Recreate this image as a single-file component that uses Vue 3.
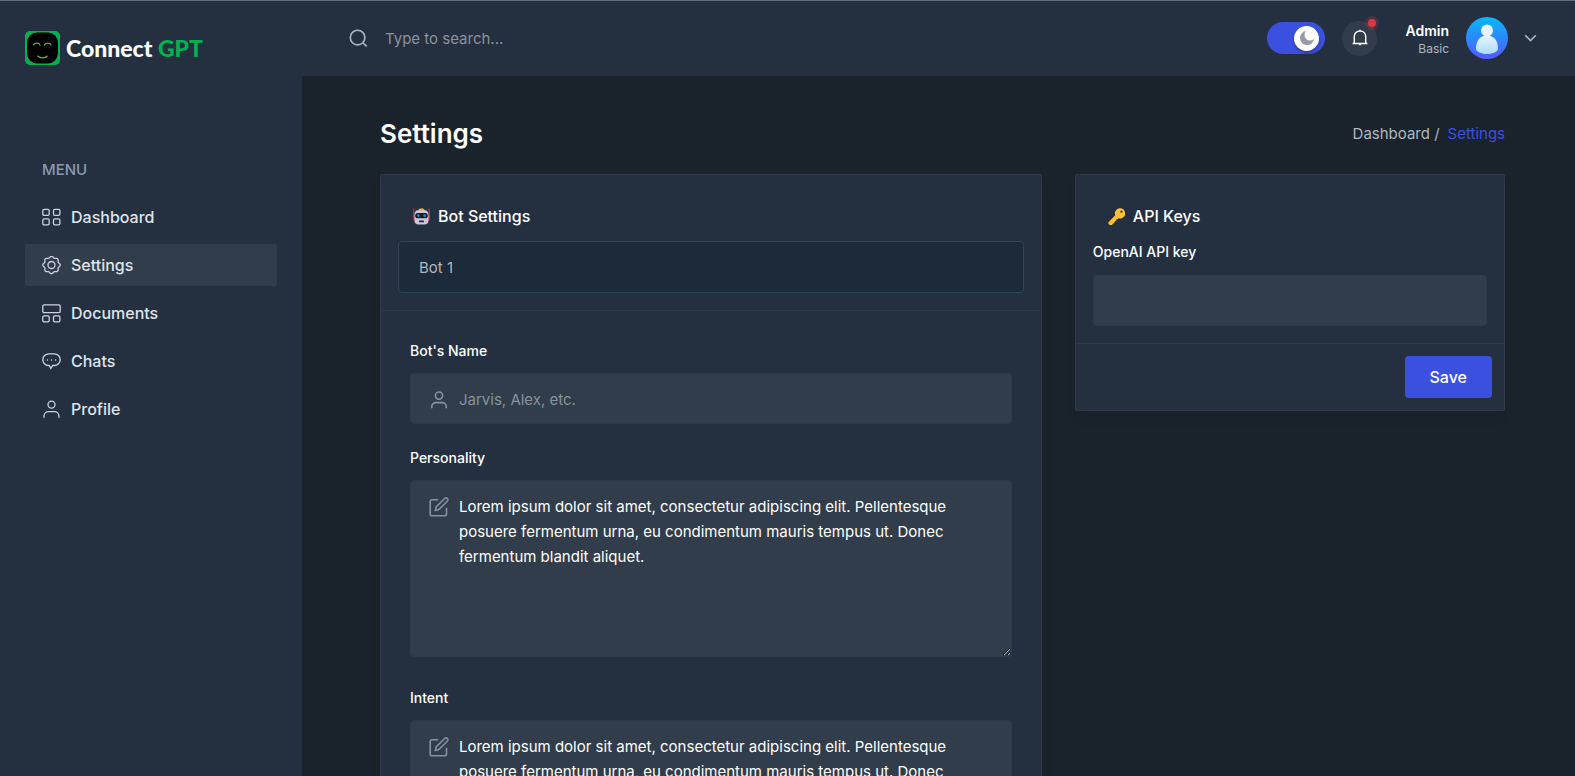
<script setup>
import { ref } from 'vue'

const menu = [
  { name: 'Dashboard', icon: 'grid' },
  { name: 'Settings', icon: 'gear' },
  { name: 'Documents', icon: 'layout' },
  { name: 'Chats', icon: 'chat' },
  { name: 'Profile', icon: 'user' }
]
const active = ref('Settings')
const dark = ref(true)
const search = ref('')
const bot = ref('Bot 1')
const botName = ref('')
const apiKey = ref('')
const lorem =
  'Lorem ipsum dolor sit amet, consectetur adipiscing elit. Pellentesque posuere fermentum urna, eu condimentum mauris tempus ut. Donec fermentum blandit aliquet.'
const areas = ref([
  { id: 'personality', label: 'Personality', text: lorem },
  { id: 'intent', label: 'Intent', text: lorem }
])

const gearPoints = Array.from({ length: 120 }, (_, i) => {
  const a = (i / 120) * Math.PI * 2
  const r = 8 + 0.7 * Math.cos(8 * a)
  return `${(9.5 + r * Math.cos(a)).toFixed(2)},${(9 + r * Math.sin(a)).toFixed(2)}`
}).join(' ')
</script>

<template>
  <div class="shell">
    <aside class="sidebar">
      <a class="brand" href="#">
        <svg class="brand-mark" viewBox="0 0 35 34" aria-hidden="true">
          <rect width="35" height="34" rx="5" fill="#05b050" />
          <rect x="2" y="1.500" width="31" height="31" rx="10" fill="#000" />
          <g fill="none" stroke="#6cb33f" stroke-width="1.300" stroke-linecap="round">
            <path d="M8.500 14c1-2.400 5.500-2.400 6.500 0M19.500 14c1-2.400 5.500-2.400 6.500 0" />
            <path d="M13 25.300c2 2 7 2 9 0" />
          </g>
        </svg>
        <span class="brand-name">Connect <span class="brand-green">GPT</span></span>
      </a>
      <nav class="nav">
        <h3 class="nav-title">MENU</h3>
        <ul>
          <li v-for="item in menu" :key="item.name">
            <a
              href="#"
              class="nav-link"
              :class="{ active: active === item.name }"
              @click.prevent="active = item.name"
            >
              <svg class="nav-icon" viewBox="0 0 19 19" aria-hidden="true">
                <g v-if="item.icon === 'grid'">
                  <rect x=".8" y="1.300" width="6.400" height="6" rx="1.300" />
                  <rect x="11.500" y="1.300" width="6.400" height="6" rx="1.300" />
                  <rect x=".8" y="10.900" width="6.400" height="6" rx="1.300" />
                  <rect x="11.500" y="10.900" width="6.400" height="6" rx="1.300" />
                </g>
                <g v-else-if="item.icon === 'gear'">
                  <circle cx="9.500" cy="9" r="3.500" />
                  <polygon :points="gearPoints" />
                </g>
                <g v-else-if="item.icon === 'layout'">
                  <rect x=".8" y=".8" width="17.400" height="7.800" rx="1.300" />
                  <rect x=".8" y="11.800" width="6.400" height="6" rx="1.300" />
                  <rect x="11.500" y="11.800" width="6.400" height="6" rx="1.300" />
                </g>
                <g v-else-if="item.icon === 'chat'">
                  <path
                    d="M7 1.800h5.400c3.200 0 5.800 2.600 5.800 5.900 0 3.200-2.600 5.800-5.800 5.800h-1.700l-1.900 2.900-1.500-2.900H6.600C3.400 13.500.8 10.900.8 7.700c0-3.300 2.600-5.900 6.200-5.900z"
                  />
                  <path class="dots" d="M5.300 8h.1M9.400 8h.1M13.500 8h.1" />
                </g>
                <g v-else>
                  <circle cx="9.500" cy="4.600" r="3.500" />
                  <path d="M2 17.800v-1.600c0-2.600 2.100-4.500 4.600-4.500h5.800c2.500 0 4.600 1.900 4.600 4.500v1.600" />
                </g>
              </svg>
              {{ item.name }}
            </a>
          </li>
        </ul>
      </nav>
    </aside>

    <div class="content">
      <header class="header">
        <form class="search" @submit.prevent>
          <button type="submit" class="plain" aria-label="Search">
            <svg class="search-icon" viewBox="0 0 19 19" aria-hidden="true">
              <circle cx="8.600" cy="8.600" r="7.300" />
              <path d="M13.800 13.800l4 3.600" />
            </svg>
          </button>
          <input v-model="search" type="text" placeholder="Type to search..." aria-label="Search text" />
        </form>
        <div class="tools">
          <label class="toggle">
            <input v-model="dark" type="checkbox" aria-label="Dark mode" />
            <span class="knob">
              <svg viewBox="0 0 16 16" aria-hidden="true">
                <path d="M14.900 8.900A7 7 0 1 1 7.100 1.100a5.500 5.500 0 0 0 7.800 7.800z" fill="#969aa1" />
              </svg>
            </span>
          </label>
          <button type="button" class="bell" aria-label="Notifications">
            <svg viewBox="0 0 18 18" aria-hidden="true">
              <path d="M3.300 14V7.400C3.300 4.300 5.800 2 9 2s5.700 2.300 5.700 5.400V14M1.600 14.500h14.800M9 .700V2M9 14.500v2" />
            </svg>
            <span class="badge"></span>
          </button>
          <button type="button" class="user">
            <span class="user-text">
              <span class="user-name">Admin</span>
              <span class="user-role">Basic</span>
            </span>
            <svg class="avatar" viewBox="0 0 42 42" aria-hidden="true">
              <defs>
                <linearGradient id="avatarBg" x1="0" y1="0" x2="0" y2="1">
                  <stop offset="0" stop-color="#04b9fd" />
                  <stop offset="1" stop-color="#5558ff" />
                </linearGradient>
                <linearGradient id="avatarFg" x1="0" y1="0" x2="0" y2="1">
                  <stop offset="0" stop-color="#e6f4ff" />
                  <stop offset="1" stop-color="#addcff" />
                </linearGradient>
              </defs>
              <circle cx="21" cy="21" r="21" fill="url(#avatarBg)" />
              <circle cx="21" cy="13.500" r="6" fill="#e6f4ff" />
              <path d="M10 31.500C10 23.500 14 18.400 21 18.400s11 5.100 11 13.100c0 3-4.500 5.500-11 5.500s-11-2.500-11-5.500z" fill="url(#avatarFg)" />
            </svg>
            <svg class="chevron" viewBox="0 0 13 8" aria-hidden="true">
              <path d="M1.200 1.200l5.300 5.300 5.300-5.300" />
            </svg>
          </button>
        </div>
      </header>

      <main class="main">
        <div class="title-row">
          <h2>Settings</h2>
          <nav class="crumbs" aria-label="Breadcrumb">
            <a href="#">Dashboard /</a>
            <a href="#" class="current">Settings</a>
          </nav>
        </div>

        <div class="cards">
          <section class="card bot-card">
            <div class="card-top">
              <h3>
                <svg class="emoji" viewBox="0 0 17 17" aria-hidden="true">
                  <path d="M.7 2v8M16.300 2v8" stroke="#f0263c" stroke-width="1" />
                  <circle cx=".9" cy="1.200" r=".8" fill="#f0263c" />
                  <circle cx="16.100" cy="1.200" r=".8" fill="#f0263c" />
                  <rect x=".3" y="7" width="1.600" height="5.500" rx=".6" fill="#f0263c" />
                  <rect x="15.100" y="7" width="1.600" height="5.500" rx=".6" fill="#f0263c" />
                  <path d="M5.200 3c0-1.800 1.400-2.700 3.300-2.700s3.300.9 3.300 2.700z" fill="#fba81f" />
                  <path d="M5 2.300h7c2.200 0 3.500 2 3.500 4v6.200c0 2.400-1.500 4-4 4h-6c-2.500 0-4-1.600-4-4V6.300c0-2 1.300-4 3.500-4z" fill="#cdc4d8" />
                  <rect x="2.200" y="4.900" width="12.600" height="5.400" rx="2.600" fill="#1c1b23" />
                  <circle cx="5.400" cy="7.600" r="1.300" fill="#0a96dc" />
                  <circle cx="11.600" cy="7.600" r="1.300" fill="#0a96dc" />
                  <rect x="6" y="12.400" width="5" height="1.800" rx=".6" fill="#321b41" />
                </svg>
                Bot Settings
              </h3>
              <select v-model="bot" class="select" aria-label="Bot">
                <option>Bot 1</option>
              </select>
            </div>
            <form class="fields" @submit.prevent>
              <div class="field">
                <label for="bot-name">Bot's Name</label>
                <div class="control">
                  <svg class="field-icon" viewBox="0 0 20 20" aria-hidden="true">
                    <circle cx="10" cy="5.600" r="3.600" />
                    <path d="M2.800 18.300v-1.700c0-2.200 1.700-4 3.900-4h6.600c2.200 0 3.900 1.800 3.900 4v1.700" />
                  </svg>
                  <input id="bot-name" v-model="botName" type="text" class="box" placeholder="Jarvis, Alex, etc." />
                </div>
              </div>
              <div v-for="area in areas" :key="area.id" class="field">
                <label :for="area.id">{{ area.label }}</label>
                <div class="control">
                  <svg class="field-icon" viewBox="0 0 20 20" aria-hidden="true">
                    <path d="M9.200 2.700H3c-1 0-1.800.8-1.800 1.800v12.400c0 1 .8 1.800 1.800 1.800h12.700c1 0 1.800-.8 1.800-1.800v-6.200" />
                    <path d="M15.600 1.500c.8-.8 2-.8 2.700 0 .8.700.8 1.900 0 2.700l-8.500 8.400-3.500.9.900-3.600z" />
                  </svg>
                  <textarea :id="area.id" v-model="area.text" class="box" rows="6" spellcheck="false"></textarea>
                </div>
              </div>
            </form>
          </section>

          <section class="card key-card">
            <form @submit.prevent>
              <div class="card-top">
                <h3>
                  <svg class="emoji" viewBox="0 0 17 17" aria-hidden="true">
                    <path
                      fill="#fdc130"
                      fill-rule="evenodd"
                      d="M11.600.3a5.100 5.100 0 0 1 2.600 9.700c-1.200.6-2.600.7-3.800.3l-.8.900-1.200.1-.2 1.500-1.300.2-.2 1.200-2.700 2.500c-.7.600-1.600.5-3-.1-.9-1-.9-1.900-.3-2.500l6.500-6.900A5.100 5.100 0 0 1 11.600.3zm1.800 2.300a1.100 1.100 0 1 0 0 2.200 1.100 1.100 0 0 0 0-2.200z"
                    />
                  </svg>
                  API Keys
                </h3>
                <label for="api-key">OpenAI API key</label>
                <input id="api-key" v-model="apiKey" type="text" class="box" />
              </div>
              <div class="card-foot">
                <button type="submit" class="save">Save</button>
              </div>
            </form>
          </section>
        </div>
      </main>
    </div>
  </div>
</template>

<style>
html,
body {
  background: #1a222c;
}
body {
  margin: 0;
}
</style>

<style scoped>
* {
  box-sizing: border-box;
}
.shell {
  display: flex;
  height: 100vh;
  overflow: hidden;
  border-top: 1px solid #5f6f79;
  background: #1a222c;
  color: #aeb7c0;
  font: 400 15px/25px Inter, "Liberation Sans", sans-serif;
}
a {
  color: inherit;
  text-decoration: none;
}
h2,
h3,
ul {
  margin: 0;
  padding: 0;
  list-style: none;
}
input,
select,
textarea,
button {
  font: inherit;
  color: inherit;
}
svg {
  display: block;
  flex: none;
}
.sidebar {
  flex: 0 0 302px;
  background: #24303f;
}
.brand {
  display: flex;
  align-items: center;
  gap: 6px;
  padding: 30px 25px 0;
}
.brand-mark {
  width: 35px;
  height: 34px;
}
.brand-name {
  font: 900 23px/34px Lato, sans-serif;
  color: #fff;
}
.brand-green {
  color: #05b050;
}
.nav {
  padding: 92px 25px 0;
}
.nav-title {
  padding-left: 17px;
  margin-bottom: 14px;
  font-size: 15px;
  font-weight: 500;
  color: #8a99af;
}
.nav ul {
  display: flex;
  flex-direction: column;
  gap: 6px;
}
.nav-link {
  display: flex;
  align-items: center;
  gap: 10px;
  height: 42px;
  padding: 0 17px;
  border-radius: 2px;
  color: #dee4ee;
  font-size: 16px;
  font-weight: 500;
}
.nav-link.active {
  background: #313d4a;
}
.nav-icon {
  width: 19px;
  height: 19px;
  fill: none;
  stroke: #ccd3df;
  stroke-width: 1.3;
}
.dots {
  stroke-linecap: round;
  stroke-width: 1.4;
}
.content {
  flex: 1;
  min-width: 0;
  display: flex;
  flex-direction: column;
}
.header {
  flex: 0 0 75px;
  display: flex;
  align-items: center;
  justify-content: space-between;
  padding: 0 38px 0 47px;
  background: #24303f;
}
.plain {
  padding: 0;
  border: 0;
  background: none;
}
.search {
  display: flex;
  flex: 1;
  align-items: center;
  gap: 17px;
}
.search input {
  flex: 1;
  min-width: 0;
  padding: 0;
  border: 0;
  outline: 0;
  background: none;
}
.search input::placeholder {
  color: #8a939e;
  opacity: 1;
}
.search-icon {
  width: 19px;
  height: 19px;
  fill: none;
  stroke: #aeb7c0;
  stroke-width: 1.6;
}
.tools {
  display: flex;
  align-items: center;
  padding-bottom: 1px;
}
.toggle {
  display: flex;
  align-items: center;
  justify-content: flex-end;
  width: 58px;
  height: 32px;
  padding: 0 6px;
  border-radius: 16px;
  background: #3c50e0;
}
.toggle input {
  width: 0;
  height: 0;
  margin: 0;
  opacity: 0;
}
.knob {
  display: grid;
  place-items: center;
  width: 25px;
  height: 25px;
  border-radius: 50%;
  background: #fff;
  box-shadow: 0 2px 3px rgba(0, 0, 0, 0.3);
}
.knob svg {
  width: 16px;
  height: 16px;
}
.bell {
  position: relative;
  display: grid;
  place-items: center;
  width: 35px;
  height: 35px;
  margin-left: 17px;
  padding: 0;
  border: 0;
  border-radius: 50%;
  background: #313d4a;
}
.bell svg {
  width: 18px;
  height: 18px;
  fill: none;
  stroke: #fff;
  stroke-width: 1.4;
}
.badge {
  position: absolute;
  top: -2px;
  right: 1px;
  width: 8px;
  height: 8px;
  border-radius: 50%;
  background: #dc3545;
  box-shadow: 0 0 0 3px rgba(220, 53, 69, 0.2);
}
.user {
  display: flex;
  align-items: center;
  margin-left: 28px;
  padding: 0;
  border: 0;
  background: none;
}
.user-text {
  display: flex;
  flex-direction: column;
  padding-top: 3px;
  text-align: right;
}
.user-name {
  font-size: 14px;
  line-height: 18px;
  font-weight: 600;
  color: #fff;
}
.user-role {
  font-size: 12px;
  line-height: 18px;
}
.avatar {
  width: 42px;
  height: 42px;
  margin: 0 16px 0 17px;
}
.chevron {
  width: 13px;
  height: 8px;
  fill: none;
  stroke: #aeb7c0;
  stroke-width: 1.6;
}
.main {
  flex: 1;
  min-height: 0;
  overflow-y: auto;
  scrollbar-width: none;
  padding: 42px 70px 42px 78px;
}
.title-row {
  display: flex;
  align-items: center;
  justify-content: space-between;
  height: 31px;
  margin-bottom: 25px;
}
.title-row h2 {
  font-size: 26px;
  line-height: 31px;
  font-weight: 600;
  color: #fff;
}
.crumbs {
  display: flex;
  gap: 8px;
}
.crumbs .current {
  color: #3c50e0;
}
.cards {
  display: grid;
  grid-template-columns: repeat(5, 1fr);
  align-items: start;
  gap: 33px;
}
.card {
  border: 1px solid #2e3a47;
  border-radius: 2px;
  background: #24303f;
  box-shadow: 0 8px 13px -3px rgba(0, 0, 0, 0.07);
}
.bot-card {
  grid-column: span 3;
}
.key-card {
  grid-column: span 2;
}
.card-top {
  padding: 29px 17px 17px;
  border-bottom: 1px solid #2e3a47;
}
.card h3 {
  display: flex;
  align-items: center;
  gap: 8px;
  padding-left: 15px;
  margin-bottom: 12px;
  font-size: 16px;
  font-weight: 500;
  color: #fff;
}
.emoji {
  width: 17px;
  height: 17px;
}
.select {
  display: block;
  appearance: none;
  width: 100%;
  height: 52px;
  padding: 0 20px;
  border: 1px solid #344454;
  border-radius: 4px;
  background: #1d2a39;
}
.fields {
  padding: 29px;
}
.field {
  margin-bottom: 23px;
}
label {
  display: block;
  color: #fff;
  font-size: 14px;
  line-height: 21px;
  font-weight: 500;
}
.field label {
  margin-bottom: 12px;
}
.control {
  position: relative;
}
.field-icon {
  position: absolute;
  top: 17px;
  left: 19px;
  width: 20px;
  height: 20px;
  fill: none;
  stroke: #87929c;
  stroke-width: 1.6;
}
.box {
  display: block;
  width: 100%;
  height: 51px;
  padding: 13px 20px 12px;
  border: 1px solid #2e3a47;
  border-radius: 4px;
  outline: 0;
  background: #313d4a;
  color: #fff;
}
.box::placeholder {
  color: #87929c;
  opacity: 1;
}
.control .box {
  padding-left: 48px;
}
textarea.box {
  height: 177px;
  margin-bottom: 30px;
}
.key-card label {
  margin-bottom: 13px;
}
.card-foot {
  display: flex;
  justify-content: flex-end;
  padding: 12px;
}
.save {
  height: 42px;
  padding: 0 25px;
  border: 0;
  border-radius: 4px;
  background: #3c50e0;
  color: #fff;
  font-size: 16px;
  font-weight: 500;
}
</style>
